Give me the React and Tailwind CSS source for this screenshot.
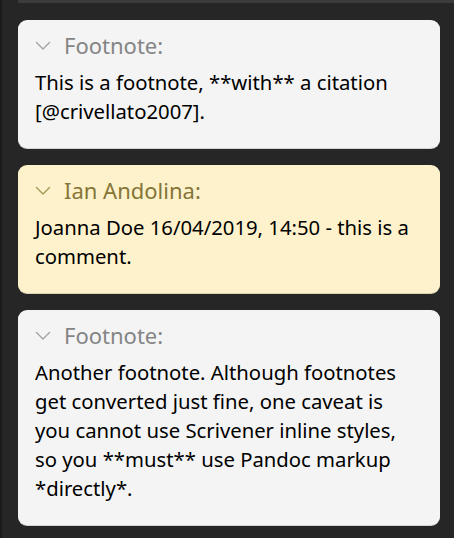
import React from 'react';

const notes = [
  {
    id: 1,
    kind: 'footnote',
    title: 'Footnote:',
    text: 'This is a footnote, **with** a citation [@crivellato2007].',
  },
  {
    id: 2,
    kind: 'comment',
    title: 'Ian Andolina:',
    text: 'Joanna Doe 16/04/2019, 14:50 - this is a comment.',
  },
  {
    id: 3,
    kind: 'footnote',
    title: 'Footnote:',
    text: 'Another footnote. Although footnotes get converted just fine, one caveat is you cannot use Scrivener inline styles, so you **must** use Pandoc markup *directly*.',
  },
];

const Chevron = ({ color }) => (
  <svg width="16" height="10" viewBox="0 0 16 10" fill="none">
    <path d="M1.5 1.5 L8 8 L14.5 1.5" stroke={color} strokeWidth="1.4" strokeLinecap="round" strokeLinejoin="round" />
  </svg>
);

const NoteCard = ({ note }) => {
  const isComment = note.kind === 'comment';
  return (
    <div
      className={
        isComment
          ? 'rounded-[9px] bg-[#fdf2cc] shadow-[0_1px_0_#d9d2b3] pl-[17px] pr-[30px] pt-[11px] pb-[22px]'
          : 'rounded-[9px] bg-[#f4f4f4] shadow-[0_1px_0_#d4d4d4] pl-[17px] pr-[30px] pt-[11px] pb-[22px]'
      }
    >
      <div className="flex items-center h-[29px]">
        <div className="w-[29px] flex items-center">
          <Chevron color={isComment ? '#a49659' : '#a3a3a3'} />
        </div>
        <span className={isComment ? 'text-[#857536] text-[22px]' : 'text-[#858585] text-[22px]'}>
          {note.title}
        </span>
      </div>
      <p className="mt-[8px] text-[20.3px] leading-[29px] text-black">{note.text}</p>
    </div>
  );
};

export default function App() {
  return (
    <div
      className="w-[454px] h-[538px] bg-[#262626] flex overflow-hidden"
      style={{ fontFamily: '"Noto Sans", "Open Sans", sans-serif' }}
    >
      <div className="w-[2px] bg-[#1b1b1b]" />
      <div className="flex-1 flex flex-col">
        <div className="h-[3px] ml-4 bg-[#3c3c3c]" />
        <div className="flex flex-col gap-[17px] pt-[17px] pl-4 pr-[14px]">
          {notes.map((note) => (
            <NoteCard key={note.id} note={note} />
          ))}
        </div>
      </div>
    </div>
  );
}
